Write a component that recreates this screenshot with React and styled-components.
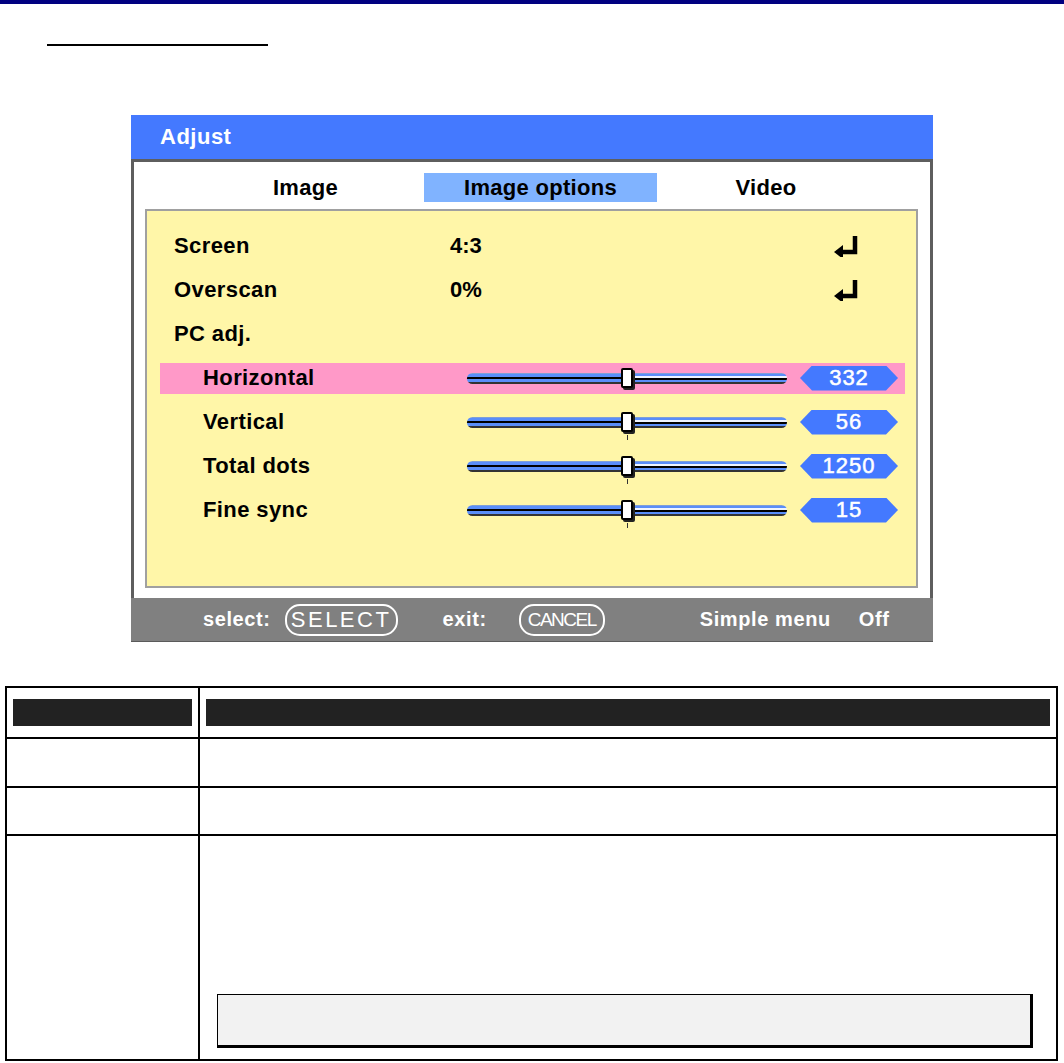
import React from "react";
import styled, { createGlobalStyle } from "styled-components";

const Global = createGlobalStyle`
  html, body { margin: 0; padding: 0; background: #fff; }
  body { font-family: "Liberation Sans", Arial, sans-serif; }
`;

const Page = styled.div`
  width: 1064px;
  height: 1063px;
  overflow: hidden;
  display: flex;
  flex-direction: column;
`;

const TopBar = styled.div`
  height: 4px;
  background: #000080;
`;

const Heading = styled.h2`
  margin: 40px 0 0 47px;
  width: 221px;
  height: 0;
  border-bottom: 2px solid #000;
  font-size: 0;
`;

const Screen = styled.div`
  margin: 69px 0 0 131px;
  width: 802px;
  display: flex;
  flex-direction: column;
  font-family: "Liberation Sans", Arial, sans-serif;
  font-weight: 700;
`;

const TitleBar = styled.div`
  height: 44px;
  background: #4479ff;
  color: #fff;
  font-size: 22px;
  display: flex;
  align-items: center;
  padding-left: 29px;
  letter-spacing: 0.5px;
`;

const Body = styled.div`
  background: #fff;
  border: 3px solid #5e5e5e;
  border-bottom: none;
  height: 436px;
  display: flex;
  flex-direction: column;
`;

const Tabs = styled.div`
  display: flex;
  margin: 11px 0 0 53px;
  height: 29px;
`;

const Tab = styled.div`
  width: ${(p) => p.$w}px;
  height: 29px;
  display: flex;
  align-items: center;
  justify-content: center;
  font-size: 22px;
  color: #000;
  background: ${(p) => (p.$active ? "#80b3ff" : "transparent")};
  letter-spacing: 0.3px;
`;

const Panel = styled.div`
  margin: 7px 12px 0 11px;
  background: #fff6a8;
  border: 2px solid #a0a0a0;
  padding-top: 13px;
  box-sizing: border-box;
  height: 379px;
  display: flex;
  flex-direction: column;
`;

const Row = styled.div`
  height: 44px;
  display: flex;
  align-items: center;
  padding: 0 11px 0 13px;
`;

const Strip = styled.div`
  flex: 1;
  height: 31px;
  display: flex;
  align-items: center;
  background: ${(p) => (p.$active ? "#ff99c8" : "transparent")};
`;

const Label = styled.div`
  width: 290px;
  box-sizing: border-box;
  padding-left: ${(p) => (p.$sub ? 43 : 14)}px;
  font-size: 22px;
  color: #000;
  letter-spacing: 0.4px;
`;

const Value = styled.div`
  width: 383px;
  font-size: 22px;
  color: #000;
`;

const SliderWrap = styled.div`
  margin-left: 17px;
  position: relative;
  width: 320px;
  height: 11px;
  display: flex;
`;

const TrackPart = styled.div`
  height: 11px;
  border-radius: ${(p) => (p.$left ? "6px 0 0 6px" : "0 6px 6px 0")};
  background: ${(p) =>
    p.$left
      ? "linear-gradient(to bottom, #7f9fd8 0 1px, #5a8ef9 1px 4px, #000 4px 6px, #5a8ef9 6px 9px, #333 9px 11px)"
      : "linear-gradient(to bottom, #7f9fd8 0 1px, #5a8ef9 1px 3px, #eef4ff 3px 5px, #000 5px 7px, #5a8ef9 7px 9px, #333 9px 11px)"};
`;

const Thumb = styled.div`
  position: absolute;
  top: -5px;
  width: 8px;
  height: 16px;
  margin-left: -6px;
  background: #fff;
  border: 2px solid #000;
  border-radius: 2px;
  box-shadow: 2px 2px 0 #222;
  &::after {
    content: "";
    display: ${(p) => (p.$tick ? "block" : "none")};
    position: absolute;
    left: 4px;
    top: 21px;
    width: 1px;
    height: 5px;
    background: #333;
  }
`;

const Badge = styled.div`
  margin-left: 13px;
  width: 98px;
  height: 25px;
  background: #4479ff;
  clip-path: polygon(12px 0, calc(100% - 12px) 0, 100% 50%, calc(100% - 12px) 100%, 12px 100%, 0 50%);
  color: #fff;
  font-size: 22px;
  display: flex;
  align-items: center;
  justify-content: center;
  letter-spacing: 1px;
  font-weight: 400;
  -webkit-text-stroke: 0.5px #fff;
`;

const Footer = styled.div`
  height: 43px;
  background: #808080;
  border-bottom: 1px solid #5a5a5a;
  display: flex;
  align-items: center;
  color: #fff;
  font-size: 20px;
  font-weight: 700;
  letter-spacing: 0.6px;
`;

const FootText = styled.span`
  margin-left: ${(p) => p.$ml}px;
`;

const Pill = styled.span`
  margin-left: ${(p) => p.$ml}px;
  width: ${(p) => p.$w}px;
  height: 32px;
  border: 2px solid #fff;
  border-radius: 15px;
  display: flex;
  align-items: center;
  justify-content: center;
  font-weight: 400;
  font-size: ${(p) => p.$fs}px;
  letter-spacing: ${(p) => p.$ls}px;
  box-sizing: border-box;
`;

const Table = styled.table`
  margin: 44px 0 0 5px;
  width: 1053px;
  border-collapse: collapse;
  table-layout: fixed;
`;

const Cell = styled.td`
  border: 2px solid #000;
  padding: 0;
  height: ${(p) => p.$h}px;
  vertical-align: ${(p) => p.$va || "top"};
`;

const HeadCell = styled.th`
  border: 2px solid #000;
  padding: 10px 6px 11px 6px;
  height: 28px;
`;

const HeadBar = styled.div`
  height: 27px;
  background: #222;
`;

const Note = styled.div`
  margin: 0 0 11px 17px;
  width: 812px;
  height: 50px;
  background: #f2f2f2;
  border-top: 1px solid #000;
  border-left: 1px solid #000;
  border-right: 3px solid #000;
  border-bottom: 3px solid #000;
`;

const EnterIcon = () => (
  <svg width="26" height="22" viewBox="0 0 26 22">
    <path d="M22 1 V17 H8" fill="none" stroke="#000" strokeWidth="4.5" />
    <path d="M1 17 L10 10 L10 24 Z" fill="#000" />
  </svg>
);

const rows = [
  { label: "Screen", value: "4:3" },
  { label: "Overscan", value: "0%" },
  { label: "PC adj." },
  { label: "Horizontal", sub: true, slider: 50, num: "332", active: true },
  { label: "Vertical", sub: true, slider: 50, num: "56" },
  { label: "Total dots", sub: true, slider: 50, num: "1250" },
  { label: "Fine sync", sub: true, slider: 50, num: "15" },
];

export default function App() {
  return (
    <Page>
      <Global />
      <TopBar />
      <Heading />
      <Screen>
        <TitleBar>Adjust</TitleBar>
        <Body>
          <Tabs>
            <Tab $w={237}>Image</Tab>
            <Tab $w={233} $active>Image options</Tab>
            <Tab $w={218}>Video</Tab>
          </Tabs>
          <Panel>
            {rows.map((r) => (
              <Row key={r.label}>
                <Strip $active={r.active}>
                  <Label $sub={r.sub}>{r.label}</Label>
                  {r.value && (
                    <>
                      <Value>{r.value}</Value>
                      <EnterIcon />
                    </>
                  )}
                  {r.num && (
                    <>
                      <SliderWrap>
                        <TrackPart $left style={{ width: `${r.slider}%` }} />
                        <TrackPart style={{ width: `${100 - r.slider}%` }} />
                        <Thumb $tick={!r.active} style={{ left: `${r.slider}%` }} />
                      </SliderWrap>
                      <Badge>{r.num}</Badge>
                    </>
                  )}
                </Strip>
              </Row>
            ))}
          </Panel>
        </Body>
        <Footer>
          <FootText $ml={72}>select:</FootText>
          <Pill $ml={14} $w={113} $fs={22} $ls={2.5}>SELECT</Pill>
          <FootText $ml={45}>exit:</FootText>
          <Pill $ml={32} $w={86} $fs={19} $ls={-1.5}>CANCEL</Pill>
          <FootText $ml={95}>Simple menu</FootText>
          <FootText $ml={28}>Off</FootText>
        </Footer>
      </Screen>
      <Table>
        <colgroup>
          <col style={{ width: 193 }} />
          <col />
        </colgroup>
        <thead>
          <tr>
            <HeadCell><HeadBar /></HeadCell>
            <HeadCell><HeadBar /></HeadCell>
          </tr>
        </thead>
        <tbody>
          <tr>
            <Cell $h={47} />
            <Cell $h={47} />
          </tr>
          <tr>
            <Cell $h={46} />
            <Cell $h={46} />
          </tr>
          <tr>
            <Cell $h={223} />
            <Cell $h={223} $va="bottom">
              <Note />
            </Cell>
          </tr>
        </tbody>
      </Table>
    </Page>
  );
}
